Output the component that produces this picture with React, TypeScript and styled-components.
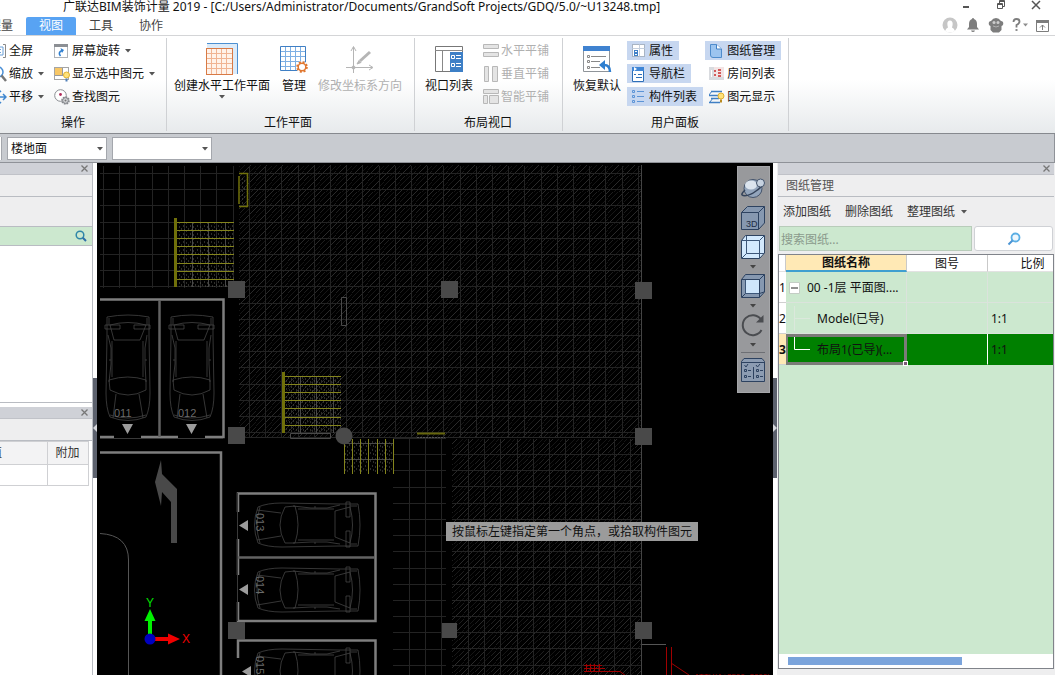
import React from "react";
import styled, { createGlobalStyle, css } from "styled-components";

const GlobalStyle = createGlobalStyle`
  * { box-sizing: border-box; }
  html, body, #root { height: 100%; }
  body { margin: 0; overflow: hidden; }
  body, button, input, select, table {
    font-family: "Noto Sans", "Noto Sans CJK SC", sans-serif;
    font-size: 12px;
    line-height: 16px;
    color: #111;
  }
  button { border: 0; padding: 0; background: none; white-space: nowrap; }
  svg { display: block; flex: none; }
`;

const line = "#b9bcc2";
const green = "#cce8cf";

const Window = styled.div`
  display: flex;
  flex-direction: column;
  height: 100vh;
  overflow: hidden;
  background: #fff;
`;

/* ---------- title bar and tabs ---------- */

const TitleBar = styled.header`
  display: flex;
  justify-content: space-between;
  height: 16px;
  padding: 0 13px 0 63px;
  line-height: 12px;
`;

const Title = styled.h1`
  margin: 0;
  font-size: 12px;
  line-height: 13px;
  font-weight: 400;
  white-space: nowrap;
`;

const WindowControls = styled.div`
  display: flex;
  gap: 23px;
  button { width: 12px; height: 12px; }
`;

const TabRow = styled.div`
  display: flex;
  justify-content: space-between;
  align-items: flex-end;
  height: 20px;
  border-bottom: 1px solid #d4d5d7;
`;

const Tabs = styled.nav`
  display: flex;
  margin-left: -36px;
`;

const Tab = styled.button<{ $active?: boolean }>`
  height: 18px;
  padding: 0 13px;
  line-height: 18px;
  border-radius: 2px 2px 0 0;
  color: ${(p) => (p.$active ? "#fff" : "#444")};
  background: ${(p) => (p.$active ? "#58a3f3" : "transparent")};
`;

const AccountTools = styled.div`
  display: flex;
  align-items: center;
  gap: 8px;
  height: 20px;
  padding-right: 6px;
`;

/* ---------- ribbon ---------- */

const Ribbon = styled.div`
  display: flex;
  padding: 2px 0;
  background: linear-gradient(#fff 45%, #e7eaec);
  border-bottom: 1px solid #86898e;
`;

const Group = styled.section<{ $pad: string; $cut?: boolean }>`
  display: flex;
  flex-direction: column;
  padding: ${(p) => p.$pad};
  border-right: 1px solid #cfd1d4;
  ${(p) => p.$cut && css`margin-left: -16px;`}
`;

const GroupBody = styled.div`
  display: flex;
  gap: 2px;
  height: 65px;
`;

const GroupLabel = styled.h2`
  margin: 9px 0 0;
  font-size: 12px;
  font-weight: 400;
  text-align: center;
`;

const BigButton = styled.button`
  display: flex;
  flex-direction: column;
  align-items: center;
  gap: 1px;
  padding: 0 4px;
  color: #111;
  &:disabled { color: #b0b0b0; }
`;

const BigIcon = styled.span`
  display: flex;
  align-items: center;
  height: 36px;
`;

const SmallColumn = styled.div`
  display: flex;
  flex-direction: column;
  align-items: flex-start;
  gap: 4px;
`;

const SmallButton = styled.button<{ $pressed?: boolean; $menu?: boolean }>`
  display: flex;
  align-items: center;
  gap: 2px;
  height: 19px;
  padding: 0 ${(p) => (p.$menu ? 4 : 6)}px 0 4px;
  background: ${(p) => (p.$pressed ? "#c7d7f0" : "transparent")};
  &:disabled { color: #b0b0b0; }
`;

const ArrowSvg = styled.svg<{ $gap?: number }>`
  margin-left: ${(p) => p.$gap ?? 0}px;
`;

const Caret = ({ gap, color = "#555" }: { gap?: number; color?: string }) => (
  <ArrowSvg $gap={gap} width="6" height="4" viewBox="0 0 6 4">
    <path d="M0 0H6L3 3.5Z" fill={color} />
  </ArrowSvg>
);

/* ---------- options bar ---------- */

const OptionsBar = styled.div`
  display: flex;
  align-items: center;
  gap: 5px;
  height: 29px;
  background: #c8cbd0;
  border-bottom: 1px solid #8f9298;
  border-right: 1px solid #8f9298;
`;

const CutField = styled.div`
  width: 2px;
  height: 23px;
  background: #fff;
  border-right: 1px solid #a4a7ad;
`;

const Picker = styled.label`
  position: relative;
  display: block;
  width: 100px;
  svg { position: absolute; right: 4px; top: 10px; pointer-events: none; }
`;

const Select = styled.select`
  appearance: none;
  display: block;
  width: 100%;
  height: 23px;
  padding: 1px 16px 0 3px;
  border: 1px solid #a4a7ad;
  border-radius: 0;
  background: #fff;
`;

/* ---------- docks ---------- */

const Body = styled.main`
  display: flex;
  flex: 1;
  min-height: 0;
`;

const LeftDock = styled.aside`
  display: flex;
  flex-direction: column;
  width: 93px;
  background: #fff;
  border-right: 1px solid ${line};
`;

const DockHandle = styled.div`
  display: flex;
  justify-content: flex-end;
  align-items: center;
  height: 12px;
  padding-right: 4px;
  background: #cfd1d7;
  border-bottom: 1px solid #c0c2c8;
`;

const DockTitle = styled.h3`
  margin: 0;
  height: 22px;
  padding: 3px 0 0 8px;
  font-size: 12px;
  font-weight: 400;
  color: #555;
  background: #eeeeef;
  border-bottom: 1px solid ${line};
`;

const BlankStrip = styled.div`
  height: 30px;
  background: #eeeeef;
  border-bottom: 1px solid ${line};
`;

const FilterStrip = styled.div`
  display: flex;
  justify-content: flex-end;
  align-items: center;
  height: 19px;
  padding-right: 5px;
  background: ${green};
  border-bottom: 1px solid ${line};
`;

const TreeArea = styled.div`
  height: 157px;
  margin-bottom: 4px;
  border-bottom: 1px solid ${line};
`;

const PropertyTable = styled.table`
  width: 88px;
  border-collapse: collapse;
  table-layout: fixed;
  th, td {
    height: 21px;
    padding: 0;
    font-weight: 400;
    border: 1px solid #cfd0d3;
    border-left: 0;
    overflow: hidden;
    white-space: nowrap;
  }
  th { height: 23px; background: #f3f3f4; color: #333; }
  th:first-child { text-align: left; }
`;

const CutLabel = styled.span`
  margin-left: -34px;
`;

const Splitter = styled.div`
  display: flex;
  flex-direction: column;
  width: 4px;
  padding-top: 215px;
  background: #fff;
`;

const SplitterGrip = styled.button`
  display: flex;
  align-items: center;
  justify-content: center;
  width: 4px;
  height: 100px;
  background: #5c616d;
`;

const RightDock = styled.aside`
  display: flex;
  flex-direction: column;
  width: 278px;
  padding: 0 1px 6px;
  background: #eeeeef;
`;

const DrawingTools = styled.div`
  display: flex;
  align-items: center;
  gap: 14px;
  height: 29px;
  padding: 1px 0 0 5px;
  button { display: flex; align-items: center; color: #333; }
`;

const SearchRow = styled.div`
  display: flex;
  gap: 2px;
  padding: 0 1px;
`;

const SearchInput = styled.input`
  flex: 1;
  min-width: 0;
  height: 25px;
  padding: 1px 1px 0;
  border: 1px solid #b8ccba;
  background: ${green};
  &::placeholder { color: #8a9a8c; opacity: 1; }
`;

const SearchButton = styled.button`
  display: flex;
  align-items: center;
  justify-content: center;
  width: 79px;
  height: 25px;
  background: #fff;
  border: 1px solid #cfd1d5;
  border-radius: 3px;
`;

const TableFrame = styled.div`
  display: flex;
  flex-direction: column;
  flex: 1;
  margin-top: 3px;
  overflow: hidden;
  border: 1px solid #80838a;
  background: ${green};
`;

const DrawingTable = styled.table`
  width: 299px;
  border-collapse: separate;
  border-spacing: 0;
  table-layout: fixed;
  th, td {
    padding: 0;
    font-weight: 400;
    white-space: nowrap;
    border-right: 1px solid #dbe3dc;
  }
  thead th {
    height: 17px;
    line-height: 15px;
    background: #fff;
    border-right-color: #c9c9c9;
    border-bottom: 1px solid #e2e2e2;
  }
  tbody td { height: 31px; padding-top: 1px; border-bottom: 1px solid #dbe3dc; }
  tbody th {
    padding-top: 1px;
    background: #fff;
    border-right: 0;
    border-bottom: 1px solid #d0d0d0;
    text-align: left;
  }
`;

const SortedHead = styled.th`
  && {
    font-weight: 700;
    background: #ffe9b5;
    border-bottom: 2px solid #3f9fd0;
  }
`;

const DrawingRow = styled.tr<{ $selected?: boolean }>`
  ${(p) =>
    p.$selected &&
    css`
      && td { background: #008000; border-bottom-color: #008000; border-right-color: #fff; }
      && th { background: #ffe9b5; font-weight: 700; }
      && td:nth-child(2) {
        position: relative;
        padding-top: 0;
        border: 3px solid #7b7b78;
        border-left-width: 2px;
      }
    `}
`;

const FillHandle = styled.span`
  position: absolute;
  right: -4px;
  bottom: -4px;
  width: 5px;
  height: 5px;
  background: #7b5a78;
  border: 1px solid #fff;
`;

const NameCell = styled.div<{ $selected: boolean }>`
  display: flex;
  align-items: center;
  gap: 7px;
  padding-left: ${(p) => (p.$selected ? 1 : 3)}px;
`;

const ScaleText = styled.span`
  padding-left: 3px;
`;

const ScrollTrack = styled.div`
  margin-top: auto;
  height: 14px;
  padding: 3px 9px;
  background: #fff;
`;

const ScrollThumb = styled.div`
  width: 68%;
  height: 8px;
  background: #7ba4dc;
`;

/* ---------- drawing canvas ---------- */

const Canvas = styled.div`
  position: relative;
  flex: 1;
  min-width: 0;
  overflow: hidden;
  background: #000;
`;

const Plan = styled.svg`
  position: absolute;
  left: 0;
  top: 0;
`;

const Prompt = styled.div`
  position: absolute;
  left: 349px;
  top: 359px;
  padding: 2px 6px 1px;
  background: #9b9b9b;
  white-space: nowrap;
`;

const ViewTools = styled.div`
  position: absolute;
  right: 3px;
  top: 3px;
  display: flex;
  flex-direction: column;
  align-items: center;
  gap: 5px;
  width: 33px;
  height: 227px;
  padding: 10px 2px 0 0;
  background: #98999c;
  border: 1px solid #a6a7aa;
  & > svg { margin: 1px 0 0; }
`;

const ViewDivider = styled.div`
  width: 24px;
  height: 1px;
  background: #6d6f74;
`;

/* ---------- icons ---------- */

const I16 = ({ children }: { children: React.ReactNode }) => (
  <svg width="16" height="16" viewBox="0 0 16 16" fill="none" aria-hidden="true">{children}</svg>
);

const FullScreenIcon = () => (
  <I16>
    <path d="M4 1.500H1.500V14.500H4M12 1.500H14.500V14.500H12" stroke="#8a8a8a" />
    <path d="M4 4H12V12H4Z" stroke="#6ba0d8" /><path d="M6 6.500H10M6 9.500H10" stroke="#6ba0d8" />
  </I16>
);
const ZoomIcon = () => (
  <I16>
    <circle cx="7" cy="6" r="5" stroke="#4a8fd6" strokeWidth="1.500" />
    <path d="M10.500 9.500L15 15" stroke="#777" strokeWidth="2.500" />
  </I16>
);
const PanIcon = () => (
  <I16><path d="M0 8H15M8 1V15M12 5L15 8L12 11M6 3L8 1L10 3M6 13L8 15L10 13" stroke="#3f86cf" strokeWidth="1.500" /></I16>
);
const RotateScreenIcon = () => (
  <I16>
    <rect x="0.500" y="1.500" width="13" height="13" fill="#fff" stroke="#b0b3b8" />
    <path d="M0 1H14V4H0Z" fill="#8c8f94" />
    <path d="M6.500 13Q3.500 9.500 8 7.500" stroke="#2f7fd0" strokeWidth="1.600" /><path d="M6.500 5L10 7L8 10Z" fill="#2f7fd0" />
  </I16>
);
const ShowSelectedIcon = () => (
  <I16>
    <rect x="0.500" y="1.500" width="14" height="12" fill="#fff" stroke="#a5a5a5" />
    <rect x="1" y="2" width="7" height="7" fill="#f8c766" /><path d="M1 9.500H9M8.500 2V10" stroke="#999" />
    <circle cx="12.500" cy="9" r="3" fill="#ffe27a" stroke="#e0b030" /><path d="M11.500 12.500H13.500V15.500H11.500Z" fill="#4f7fb8" />
  </I16>
);
const FindIcon = () => (
  <I16>
    <circle cx="6.500" cy="6.500" r="5.800" fill="#fff" stroke="#8a8d92" /><circle cx="6.500" cy="5.500" r="1.400" fill="#b02c5c" />
    <circle cx="11.500" cy="11.500" r="3.400" fill="#ccc" stroke="#85888d" strokeWidth="1.800" strokeDasharray="1.600 1" />
    <circle cx="11.500" cy="11.500" r="2.800" fill="#d5d7da" stroke="#85888d" />
    <circle cx="11.500" cy="11.500" r="1" fill="#777" />
  </I16>
);
const TileIcon = ({ kind }: { kind: "h" | "v" | "s" }) => (
  <I16>
    <g fill="#e4e4e4" stroke="#b8b8b8">
      {kind === "h" && <path d="M.5 1.500H15.500V5.500H.5ZM.5 9.500H15.500V13.500H.5Z" />}
      {kind === "v" && <path d="M1.500 .5H5.500V15.500H1.500ZM9.500 .5H14.500V15.500H9.500Z" />}
      {kind === "s" && <path d="M.5 .5H15.500V4.500H.5ZM.5 6.500H4.500V14.500H.5ZM6.500 6.500H15.500V14.500H6.500Z" />}
    </g>
  </I16>
);
const PropertyIcon = () => (
  <I16>
    <rect x="1.500" y="1.500" width="12" height="12" fill="#fff" stroke="#a8b4c4" />
    <path d="M1.500 5.500H13.500M8.500 1.500V13.500" stroke="#c4cfde" />
    <path d="M3 7H7V13H3Z" fill="#3f80c8" /><path d="M4 8.500H6M4 11.500H6" stroke="#fff" />
  </I16>
);
const NavIcon = () => (
  <I16>
    <path d="M1.500 2.500H12.500V15.500H1.500Z" fill="#fff" stroke="#2e6fb8" />
    <path d="M1 1H13V5H1Z" fill="#3f86d6" /><path d="M3 1L6 3L3 5Z" fill="#fff" />
    <path d="M3 8.500H5M7 8.500H11M5 11.500H11" stroke="#2e6fb8" />
  </I16>
);
const ListIcon = () => (
  <I16>
    <path d="M1.500 1.500H3.500V3.500H1.500ZM1.500 6.500H3.500V8.500H1.500ZM1.500 11.500H3.500V13.500H1.500Z" stroke="#5c94d6" />
    <path d="M6 2.500H13M6 7.500H13M6 12.500H13" stroke="#5c94d6" />
  </I16>
);
const SheetIcon = () => (
  <I16>
    <path d="M1.500 1.500H7.500L12.500 6V14.500H4Q1.500 14.500 1.500 12Z" fill="#9cc4ef" stroke="#4f8ccc" />
    <path d="M7.500 1.500V6H12.500" fill="#fff" stroke="#3f7fc4" />
  </I16>
);
const RoomIcon = () => (
  <I16>
    <path d="M0 1H15V14H0Z" fill="#d9dbdf" /><path d="M5 1H15V11H5Z" fill="#f3e4e4" />
    <path d="M5 4H7V6H5ZM5 8H7V10H5ZM9 3H12V5H9ZM9 6H12V8H9ZM9 9H12V11H9Z" fill="#d25a5a" />
    <path d="M2.500 4V11" stroke="#fff" />
  </I16>
);
const DisplayIcon = () => (
  <I16>
    <path d="M2 2.500H13M0 6.500H9M2 9.500H10M0 13.500H11" stroke="#3f7fc4" strokeWidth="1.500" />
    <path d="M3 2L0 6M4 9L1 13" stroke="#3f7fc4" />
    <circle cx="12" cy="7" r="3" fill="#ffe27a" stroke="#e0b030" /><path d="M11 10.500H13V13.500H11Z" fill="#b98a20" />
  </I16>
);

const CreatePlaneIcon = () => (
  <svg width="34" height="34" viewBox="0 0 34 34" fill="none">
    <path d="M2 2H32V32H27V6H2Z" fill="#dcebf9" /><path d="M2 1.500H32.500V32" stroke="#4c8fd0" />
    <rect x="1.500" y="6.500" width="26" height="26" fill="#fff3ea" stroke="#d87a45" />
    <path d="M6.500 7V32M11.500 7V32M16.500 7V32M21.500 7V32M2 11.500H27M2 16.500H27M2 21.500H27M2 26.500H27" stroke="#f0b493" />
  </svg>
);
const ManageIcon = () => (
  <svg width="28" height="28" viewBox="0 0 28 28" fill="none">
    <path d="M.5 1.500H25.500V25.500H.5Z" fill="#fff" />
    <path d="M5.500 1V26M10.500 1V26M15.500 1V26M20.500 1V26M0 6.500H26M0 11.500H26M0 16.500H26M0 21.500H26" stroke="#7eb0e4" />
    <path d="M.5 1.500H25.500V25.500H.5Z" stroke="#3f7fc4" />
    <circle cx="22" cy="22" r="6" fill="#fff" />
    <circle cx="22" cy="22" r="4.800" stroke="#e0772f" strokeWidth="2" strokeDasharray="2 1.770" />
    <circle cx="22" cy="22" r="3.800" fill="#fff" stroke="#e0772f" strokeWidth="1.500" />
  </svg>
);
const AxesIcon = () => (
  <svg width="28" height="28" viewBox="0 0 28 28" fill="none" stroke="#b5b5b5">
    <path d="M7.500 28V2M5 6L7.500 1.500L10 6M0 22.500H26M23 20L27 22.500L23 25" />
    <circle cx="7.500" cy="22.500" r="1.500" fill="#b5b5b5" />
    <path d="M14 16L24 7" strokeWidth="3" /><path d="M11 19L13 15.500L15 17.500Z" fill="#b5b5b5" />
  </svg>
);
const ViewportIcon = () => (
  <svg width="28" height="28" viewBox="0 0 28 28" fill="none">
    <path d="M.5 1.500H27.500V26.500H.5Z" fill="#fff" stroke="#777" /><path d="M0 5.500H28M7.500 6V26" stroke="#888" />
    <path d="M15 7H28V27H15Z" fill="#3d7fc6" />
    <path d="M16.500 10.500H19.500V13.500H16.500ZM16.500 18.500H19.500V21.500H16.500ZM21 10.500H26M21 13.500H26M21 18.500H26M21 21.500H26" stroke="#fff" />
  </svg>
);
const RestoreIcon = () => (
  <svg width="30" height="28" viewBox="0 0 30 28" fill="none">
    <path d="M1.500 1.500H27.500V26.500H1.500Z" fill="#fff" stroke="#8f9499" /><path d="M1 1H28V6H1Z" fill="#3f82d0" />
    <path d="M5.500 10.500H7.500V12.500H5.500ZM5.500 15.500H7.500V17.500H5.500ZM5.500 21.500H7.500V23.500H5.500ZM9 11.500H24M9 16.500H18M9 22.500H18" stroke="#888" />
    <path d="M22 20Q28 20 28 27" stroke="#2f7fd0" strokeWidth="2.500" /><path d="M17 20L23 15V25Z" fill="#2f7fd0" />
  </svg>
);

const CloseX = () => (
  <svg width="7" height="7" viewBox="0 0 7 7"><path d="M.5 .5L6.500 6.500M6.500 .5L.5 6.500" stroke="#777" strokeWidth="1.300" /></svg>
);

const FilterIcon = () => (
  <svg width="12" height="12" viewBox="0 0 12 12" fill="none"><circle cx="5" cy="5" r="3.800" stroke="#2f86a8" strokeWidth="1.500" /><path d="M7.800 7.800L11 11" stroke="#2f6fa8" strokeWidth="2" /></svg>
);

const SearchIcon = () => (
  <svg width="14" height="14" viewBox="0 0 14 14" fill="none"><circle cx="8.500" cy="5.500" r="4" fill="#eef7fd" stroke="#5aaee4" strokeWidth="1.800" /><path d="M5.500 8.500L1.500 12.500" stroke="#4a94d4" strokeWidth="2" /></svg>
);

const Cube = ({ face }: { face: "solid" | "wire" | "front" }) => (
  <svg width="24" height="24" viewBox="0 0 24 24" fill="none" stroke="#2d4260">
    <path
      d={face === "solid" ? "M.5 6.500L6.500 .5H23.500V17L17.500 23.500H.5Z" : "M.5 5.500L4.500 .5H23.500V18L18.500 23.500H.5Z"}
      fill={face === "wire" ? "#d3e9fd" : "#8698b0"}
    />
    {face === "solid" && (
      <>
        <path d="M.5 6.500H17.500V23.500M17.500 6.500L23.500 .5" />
        <text x="5" y="21" fontSize="9" fontFamily="Liberation Sans" fill="#1d2c44" stroke="none">3D</text>
      </>
    )}
    {face === "wire" && <path d="M.5 5.500H18.500V23.500M18.500 5.500L23.500 .5M5.500 1V18.500H23M5.500 18.500L1 23" stroke="#3c5678" />}
    {face === "front" && (
      <>
        <path d="M4.500 5.500H18.500V19.500H4.500Z" fill="#cfe6fb" stroke="#3c5678" />
        <path d="M.5 5.500H18.500V23.500M18.500 5.500L23.500 .5M4.500 19.500L1 23M18.500 19.500L23 18" />
      </>
    )}
  </svg>
);

/* ---------- plan drawing ---------- */

const steps = (from: number, to: number, step = 16.2) => {
  const out: number[] = [];
  for (let v = from; v <= to; v += step) out.push(Math.round(v) + 0.5);
  return out;
};

type Box = { x1: number; x2: number; y1: number; y2: number; vx: number; hy: number };

const TileGrid = ({ x1, x2, y1, y2, vx, hy }: Box) => (
  <path
    d={steps(vx, x2).map((x) => `M${x} ${y1}V${y2}`).join("") + steps(hy, y2).map((y) => `M${x1} ${y}H${x2}`).join("")}
    stroke="#232323"
  />
);

const Car = ({ at, side }: { at: [number, number]; side?: boolean }) => (
  <g transform={`translate(${at[0]} ${at[1]})${side ? " rotate(90)" : ""}`} stroke="#444" strokeWidth=".8" fill="none">
    <path d="M-21-51Q0-55 21-51L21-32L22 25Q22 40 18 49Q0 56-18 49Q-22 40-22 25L-21-32Z" />
    <path d="M-19-50V-43M19-50V-43M-18 47Q0 53 18 47" />
    <path d="M-18-43Q0-48 18-43L12-28H-14Z" />
    <path d="M-16-27V9M15-27V9M-20-33L-17-20V-4L-19 14M19-33L17-20V-4L18 14M-19-8H-17M17-8H19" />
    <path d="M-19 12Q0 6 18 12M-19 12L-18 22Q0 32 18 22V12M-12 26L-15 50M11 26L15 50" />
    <path d="M-23-43H-8V-39H-23ZM6-43H22V-39H6Z" />
  </g>
);

const Column = ({ x, y, s = 17 }: { x: number; y: number; s?: number }) => <rect x={x} y={y} width={s} height={s} fill="#494949" />;

const PlanDrawing = () => (
  <Plan width="676" height="512" viewBox="97 163 676 512" fill="none" aria-label="平面图">
    <defs>
      <pattern id="hatch" width="16" height="16" patternUnits="userSpaceOnUse">
        <path d="M-1 17L17-1" stroke="#2a2a2a" />
        <path d="M-1 6L6-1M10 17L17 10" stroke="#1e1e1e" />
        <path d="M-1 11L11-1M5 17L17 5" stroke="#161616" />
      </pattern>
      <pattern id="speckle" width="7" height="8" patternUnits="userSpaceOnUse">
        <path d="M1 2H2M4 3H5M6 5H7M2 6H3M4 7H5" stroke="#5c5c54" />
      </pattern>
    </defs>

    <rect x="239" y="165" width="402" height="272" fill="url(#hatch)" />
    <rect x="452" y="439" width="189" height="236" fill="url(#hatch)" />
    <TileGrid x1={100} x2={234} y1={166} y2={288} vx={103} hy={173} />
    <TileGrid x1={239} x2={641} y1={166} y2={437} vx={249} hy={173} />
    <TileGrid x1={452} x2={641} y1={439} y2={675} vx={468} hy={454} />
    <TileGrid x1={393} x2={446} y1={438} y2={675} vx={409} hy={438} />
    <path d="M239 437.500H641" stroke="#262626" />
    <path d="M641.500 165V675" stroke="#444" />
    <path d="M642 644.500H666" stroke="#555" />

    {/* stair flights */}
    <rect x="178" y="223" width="56" height="64" fill="url(#speckle)" />
    <rect x="286" y="377" width="56" height="56" fill="url(#speckle)" />
    <rect x="344" y="440" width="49" height="33" fill="url(#speckle)" />
    <path d="M192.500 223V287M208.500 223V287M225.500 223V287M300.500 377V433M316.500 377V433M333.500 377V433M344 443.500H393M344 459.500H393" stroke="#484848" />
    <path d={steps(222, 280, 8.1).map((y) => `M177 ${y}H234`).join("")} stroke="#84841c" />
    <path d={steps(376, 426, 8.1).map((y) => `M285 ${y}H341`).join("")} stroke="#84841c" />
    <path d={steps(344, 394, 8.15).map((x) => `M${x} 439V474`).join("")} stroke="#84841c" />
    <path d="M175.500 218V287M283.500 372V433" stroke="#70700a" strokeWidth="3" />
    <path d="M239 173.500H247.500V206.500H239M239 176V204" stroke="#70700a" strokeWidth="1.500" />
    <rect x="241" y="176" width="5" height="28" fill="url(#speckle)" />
    <path d="M417 433.500H445" stroke="#66660d" strokeWidth="2" />
    <path d="M417 437.500H445" stroke="#555" strokeDasharray="2 1" />
    <path d="M341.500 297.500H346.500V325.500H341.500ZM290.500 433.500H330.500V438.500H290.500Z" stroke="#4a4a4a" />

    {/* parking bays */}
    <g stroke="#7e7e7e" strokeWidth="2.500">
      <path d="M100 299.500H223.500V437H205M100 437H114M141 437H178M100 452.500H221V675" />
      <path d="M238 512V493.500H375.500V621H238V602M238 539V575" />
      <path d="M238 658V640.500H375.500V675" />
    </g>
    <path d="M159.500 300V437M238 557.500H375" stroke="#626262" strokeWidth="2.500" />
    <path d="M100 438.500H223M237.500 493V621" stroke="#3a3a3a" />
    <Car at={[128, 368]} />
    <Car at={[192, 368]} />
    <Car at={[307, 525]} side />
    <Car at={[307, 590]} side />
    <Car at={[307, 671]} side />
    <path d="M122 424H133L127.500 434ZM186 424H197L191.500 434ZM239 525.500L248 520V531ZM239 589.500L248 584V595ZM242 671.500L251 666V677Z" fill="#9c9c9c" />
    <g fill="#6a6a6a" fontFamily="Liberation Sans" fontSize="11">
      <text x="114" y="417">011</text>
      <text x="178" y="417">012</text>
      <text transform="translate(256 513) rotate(90)">013</text>
      <text transform="translate(256 576) rotate(90)">014</text>
      <text transform="translate(256 656) rotate(90)">015</text>
    </g>
    <path d="M161 460L162 474L177 489V543H171V502L162 492L161 506L155 482Z" fill="#494949" />
    <path d="M100 533.500Q128.500 535 128.500 560V675" stroke="#555" />

    <Column x={228} y={281} /><Column x={441} y={281} /><Column x={635} y={282} />
    <Column x={228} y={427} /><Column x={635} y={428} />
    <Column x={228} y={622} /><Column x={442} y={623} s={15} /><Column x={635} y={622} />
    <circle cx="344" cy="436" r="8.500" fill="#494949" />

    {/* annotations */}
    <g stroke="#a00000">
      <path d="M666.500 647V675M671.500 647V675M671 663L689 675" />
      <path d="M584 665.500H602M584 668.500H605M584 671.500H620L626 676M586.500 664V672M590.500 664V672M594.500 664V672M599.500 664V672" />
    </g>
    <text x="694" y="679" fill="#a00000" fontFamily="Liberation Sans" fontSize="8">ATTH(A+2500×2000)</text>

    {/* coordinate axes */}
    <path d="M148 639V621H144.500L150 609L155.500 621H152V639Z" fill="#00f000" />
    <path d="M150 637H168V633.500L180 639L168 644.500V641H150Z" fill="#f00000" />
    <circle cx="150" cy="639" r="5.500" fill="#0000c0" />
    <text x="146" y="607" fill="#00e000" fontFamily="Liberation Sans" fontSize="12">Y</text>
    <text x="182" y="643" fill="#f00000" fontFamily="Liberation Sans" fontSize="12">X</text>
  </Plan>
);

/* ---------- data ---------- */

const drawings = [
  { no: 1, name: "00 -1层 平面图....", scale: "", depth: 0 },
  { no: 2, name: "Model(已导)", scale: "1:1", depth: 1 },
  { no: 3, name: "布局1(已导)(...", scale: "1:1", depth: 1 },
];

const Branch = ({ depth, last }: { depth: number; last: boolean }) =>
  depth === 0 ? (
    <svg width="11" height="12" viewBox="0 0 11 12"><path d="M.5 .5H10.500V11.500H.5Z" fill="#fff" stroke="#c4cdc5" /><path d="M2 6H9" stroke="#222" /></svg>
  ) : (
    <svg width="21" height="25" viewBox="0 0 21 25">
      <path d={last ? "M5.500 0V12.500H21" : "M5.500 0V25M6 12.500H21"} fill="none" stroke={last ? "#fff" : "#dbe8dc"} />
    </svg>
  );

export default function App() {
  return (
    <Window lang="zh-CN">
      <GlobalStyle />
      <TitleBar>
        <Title>广联达BIM装饰计量 2019 - [C:/Users/Administrator/Documents/GrandSoft Projects/GDQ/5.0/~U13248.tmp]</Title>
        <WindowControls>
          <button aria-label="最小化"><svg width="12" height="12"><path d="M3 7H9" stroke="#555" strokeWidth="2" /></svg></button>
          <button aria-label="还原"><svg width="12" height="12" fill="none" stroke="#555"><path d="M2.500 3.500H7.500V8.500H2.500ZM4.500 3V.5H9.500V6.500H8M2 4.500H8M4 1.500H10" /></svg></button>
          <button aria-label="关闭"><svg width="12" height="12"><path d="M2 1L10 9M10 1L2 9" stroke="#555" strokeWidth="1.500" /></svg></button>
        </WindowControls>
      </TitleBar>
      <TabRow>
        <Tabs>
          <Tab>工程量</Tab>
          <Tab $active>视图</Tab>
          <Tab>工具</Tab>
          <Tab>协作</Tab>
        </Tabs>
        <AccountTools>
          <button aria-label="用户">
            <svg width="16" height="16" fill="none"><circle cx="8" cy="8" r="7.500" fill="#c6c6c6" /><path d="M3 14Q4 11 6 10.500Q4 4 8 3.500Q12 4 10 10.500Q12 11 13 14Q8 17 3 14Z" fill="#fff" /></svg>
          </button>
          <button aria-label="通知">
            <svg width="14" height="16"><path d="M7 1Q8 1 8 2Q11 3 11 7V10L13 12.500H1L3 10V7Q3 3 6 2Q6 1 7 1ZM5 13.500H9Q8.500 15 7 15Q5.500 15 5 13.500Z" fill="#7d7d7d" /></svg>
          </button>
          <button aria-label="助手">
            <svg width="16" height="16"><path d="M1 5Q2 4 3 4Q5 1 8 1Q11 1 13 4Q14 4 15 5Q16 8 13.500 9V13L11 15.500H5L2.500 13V9Q0 8 1 5Z" fill="#7d7d7d" /><circle cx="6" cy="5.500" r="1.500" fill="#ccc" /><circle cx="10" cy="5.500" r="1.500" fill="#ccc" /><path d="M5 9Q8 11 11 9" stroke="#b0b0b0" fill="none" /></svg>
          </button>
          <button aria-label="帮助">
            <svg width="16" height="16" fill="none"><path d="M1.500 5Q1.500 2 4.500 2Q7.500 2 7.500 4.500Q7.500 6.500 4.500 8V10.500" stroke="#7d7d7d" strokeWidth="1.800" /><path d="M3.500 12H5.500V14H3.500ZM11 6.500H16L13.500 9.500Z" fill="#8d8d8d" /></svg>
          </button>
          <button aria-label="收起功能区">
            <svg width="13" height="13" fill="none" stroke="#7d7d7d"><path d="M.5 1.500H12.500V12.500H.5Z" /><path d="M0 2.500H13" strokeWidth="3" /><path d="M6.500 11V6M4 8.500L6.500 6L9 8.500" /></svg>
          </button>
        </AccountTools>
      </TabRow>

      <Ribbon>
        <Group $pad="3px 7px 0 3px" $cut>
          <GroupBody>
            <SmallColumn>
              <SmallButton><FullScreenIcon />全屏</SmallButton>
              <SmallButton $menu><ZoomIcon />缩放<Caret gap={3} /></SmallButton>
              <SmallButton $menu><PanIcon />平移<Caret gap={3} /></SmallButton>
            </SmallColumn>
            <SmallColumn>
              <SmallButton $menu><RotateScreenIcon />屏幕旋转<Caret gap={3} /></SmallButton>
              <SmallButton $menu><ShowSelectedIcon />显示选中图元<Caret gap={3} /></SmallButton>
              <SmallButton><FindIcon />查找图元</SmallButton>
            </SmallColumn>
          </GroupBody>
          <GroupLabel>操作</GroupLabel>
        </Group>
        <Group $pad="3px 8px 0 3px">
          <GroupBody>
            <BigButton><BigIcon><CreatePlaneIcon /></BigIcon>创建水平工作平面<Caret /></BigButton>
            <BigButton><BigIcon><ManageIcon /></BigIcon>管理</BigButton>
            <BigButton disabled><BigIcon><AxesIcon /></BigIcon>修改坐标系方向</BigButton>
          </GroupBody>
          <GroupLabel>工作平面</GroupLabel>
        </Group>
        <Group $pad="3px 7px 0 6px">
          <GroupBody>
            <BigButton><BigIcon><ViewportIcon /></BigIcon>视口列表</BigButton>
            <SmallColumn>
              <SmallButton disabled><TileIcon kind="h" />水平平铺</SmallButton>
              <SmallButton disabled><TileIcon kind="v" />垂直平铺</SmallButton>
              <SmallButton disabled><TileIcon kind="s" />智能平铺</SmallButton>
            </SmallColumn>
          </GroupBody>
          <GroupLabel>布局视口</GroupLabel>
        </Group>
        <Group $pad="3px 7px 0 6px">
          <GroupBody>
            <BigButton><BigIcon><RestoreIcon /></BigIcon>恢复默认</BigButton>
            <SmallColumn>
              <SmallButton $pressed><PropertyIcon />属性</SmallButton>
              <SmallButton $pressed><NavIcon />导航栏</SmallButton>
              <SmallButton $pressed><ListIcon />构件列表</SmallButton>
            </SmallColumn>
            <SmallColumn>
              <SmallButton $pressed><SheetIcon />图纸管理</SmallButton>
              <SmallButton><RoomIcon />房间列表</SmallButton>
              <SmallButton><DisplayIcon />图元显示</SmallButton>
            </SmallColumn>
          </GroupBody>
          <GroupLabel>用户面板</GroupLabel>
        </Group>
      </Ribbon>

      <OptionsBar>
        <CutField />
        <Picker>
          <Select aria-label="构件类型" defaultValue="楼地面"><option>楼地面</option></Select>
          <Caret />
        </Picker>
        <Picker>
          <Select aria-label="构件"><option></option></Select>
          <Caret />
        </Picker>
      </OptionsBar>

      <Body>
        <LeftDock>
          <DockHandle><button aria-label="关闭"><CloseX /></button></DockHandle>
          <DockTitle />
          <BlankStrip />
          <FilterStrip><FilterIcon /></FilterStrip>
          <TreeArea />
          <DockHandle><button aria-label="关闭"><CloseX /></button></DockHandle>
          <DockTitle />
          <PropertyTable>
            <colgroup><col width="47" /><col width="41" /></colgroup>
            <thead><tr><th><CutLabel>属性值</CutLabel></th><th>附加</th></tr></thead>
            <tbody><tr><td /><td /></tr></tbody>
          </PropertyTable>
        </LeftDock>
        <Splitter><SplitterGrip aria-label="收起左侧面板"><svg width="4" height="8"><path d="M4 0V8L0 4Z" fill="#d5d7dc" /></svg></SplitterGrip></Splitter>

        <Canvas>
          <PlanDrawing />
          <Prompt>按鼠标左键指定第一个角点，或拾取构件图元</Prompt>
          <ViewTools>
            <button aria-label="动态观察">
              <svg width="24" height="24" viewBox="0 0 24 24" fill="none">
                <circle cx="12" cy="11.500" r="9" fill="#93a5bc" stroke="#44546c" /><ellipse cx="10" cy="8" rx="6" ry="4.500" fill="#dbe4ee" />
                <path d="M4 13Q-1 18 2 18.500Q8 19.500 15 14Q21 10 22 6" stroke="#34435a" strokeWidth="1.500" />
                <circle cx="19.500" cy="6" r="4" fill="#c6d2e0" stroke="#44546c" />
              </svg>
            </button>
            <button aria-label="三维"><Cube face="solid" /></button>
            <button aria-label="线框"><Cube face="wire" /></button>
            <Caret color="#444" />
            <button aria-label="前视"><Cube face="front" /></button>
            <Caret color="#444" />
            <button aria-label="旋转">
              <svg width="24" height="24" viewBox="0 0 24 24" fill="none"><path d="M20 6.500A10 10 0 1 0 20.500 17" stroke="#4a4c50" strokeWidth="2" /><path d="M22.500 2V9.500H15Z" fill="#4a4c50" /></svg>
            </button>
            <Caret color="#444" />
            <ViewDivider />
            <button aria-label="显示设置">
              <svg width="24" height="24" viewBox="0 0 24 24" fill="none" stroke="#2d4260">
                <path d="M.5 3.500L3 .5H21L23.500 3.500V23.500H.5Z" fill="#8c9cb2" /><path d="M0 4.500H24M12.500 9V21" />
                <path d="M3.500 7L5 9L7 6M15 7L16.500 9L19 6M3.500 11.500H5.500V13.500H3.500ZM3.500 17.500H5.500V19.500H3.500ZM15.500 11.500H17.500V13.500H15.500ZM15.500 17.500H17.500V19.500H15.500ZM7 12.500H10M7 18.500H10M19 12.500H22M19 18.500H22" />
              </svg>
            </button>
          </ViewTools>
        </Canvas>

        <Splitter><SplitterGrip aria-label="收起右侧面板"><svg width="4" height="8"><path d="M0 0V8L4 4Z" fill="#d5d7dc" /></svg></SplitterGrip></Splitter>
        <RightDock>
          <DockHandle><button aria-label="关闭"><CloseX /></button></DockHandle>
          <DockTitle>图纸管理</DockTitle>
          <DrawingTools>
            <button>添加图纸</button>
            <button>删除图纸</button>
            <button>整理图纸<Caret gap={6} /></button>
          </DrawingTools>
          <SearchRow>
            <SearchInput aria-label="搜索图纸" placeholder="搜索图纸..." />
            <SearchButton aria-label="搜索"><SearchIcon /></SearchButton>
          </SearchRow>
          <TableFrame>
            <DrawingTable>
              <colgroup><col width="7" /><col width="121" /><col width="81" /><col width="90" /></colgroup>
              <thead><tr><th /><SortedHead>图纸名称</SortedHead><th>图号</th><th>比例</th></tr></thead>
              <tbody>
                {drawings.map((d) => (
                  <DrawingRow key={d.no} $selected={d.no === 3}>
                    <th>{d.no}</th>
                    <td>
                      <NameCell $selected={d.no === 3}><Branch depth={d.depth} last={d.no === 3} />{d.name}</NameCell>
                      {d.no === 3 && <FillHandle />}
                    </td>
                    <td />
                    <td><ScaleText>{d.scale}</ScaleText></td>
                  </DrawingRow>
                ))}
              </tbody>
            </DrawingTable>
            <ScrollTrack><ScrollThumb /></ScrollTrack>
          </TableFrame>
        </RightDock>
      </Body>
    </Window>
  );
}
